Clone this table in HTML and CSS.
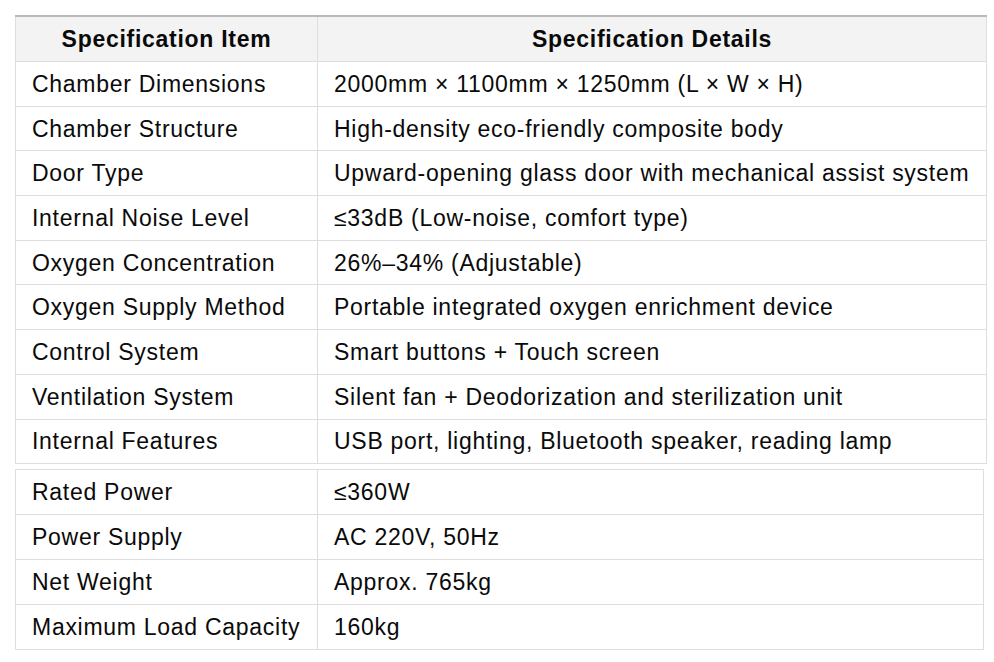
FILE: index.html
```html
<!DOCTYPE html>
<html lang="en">
<head>
<meta charset="utf-8">
<title>Specifications</title>
<link rel="stylesheet" href="styles.css">
</head>
<body>
<div class="wrap">
<table class="spec spec-top">
  <colgroup><col class="c1"><col></colgroup>
  <thead>
    <tr><th>Specification Item</th><th>Specification Details</th></tr>
  </thead>
  <tbody>
    <tr><td>Chamber Dimensions</td><td>2000mm × 1100mm × 1250mm (L × W × H)</td></tr>
    <tr><td>Chamber Structure</td><td>High-density eco-friendly composite body</td></tr>
    <tr><td>Door Type</td><td>Upward-opening glass door with mechanical assist system</td></tr>
    <tr><td>Internal Noise Level</td><td>≤33dB (Low-noise, comfort type)</td></tr>
    <tr><td>Oxygen Concentration</td><td>26%–34% (Adjustable)</td></tr>
    <tr><td>Oxygen Supply Method</td><td>Portable integrated oxygen enrichment device</td></tr>
    <tr><td>Control System</td><td>Smart buttons + Touch screen</td></tr>
    <tr><td>Ventilation System</td><td>Silent fan + Deodorization and sterilization unit</td></tr>
    <tr><td>Internal Features</td><td>USB port, lighting, Bluetooth speaker, reading lamp</td></tr>
  </tbody>
</table>
<table class="spec spec-bottom">
  <colgroup><col class="c1"><col></colgroup>
  <tbody>
    <tr><td>Rated Power</td><td>≤360W</td></tr>
    <tr><td>Power Supply</td><td>AC 220V, 50Hz</td></tr>
    <tr><td>Net Weight</td><td>Approx. 765kg</td></tr>
    <tr><td>Maximum Load Capacity</td><td>160kg</td></tr>
  </tbody>
</table>
</div>
</body>
</html>
```
FILE: styles.css
```css
html, body {
  margin: 0;
  padding: 0;
  background: #ffffff;
}
body {
  font-family: "Liberation Sans", Arial, Helvetica, sans-serif;
  color: #0a0a0a;
}
.wrap {
  padding: 15px 0 0 15px;
  display: flex;
  flex-direction: column;
  align-items: flex-start;
  gap: 5px;
}
.spec {
  border-collapse: collapse;
  table-layout: fixed;
  font-size: 23px;
  letter-spacing: 0.72px;
  line-height: 26px;
}
.spec-top {
  width: 972px;
  border-top: 2px solid #b9b9b9;
}
.spec-bottom {
  width: 969px;
}
.spec col.c1 {
  width: 302px;
}
.spec th,
.spec td {
  border: 1px solid #dedede;
  padding: 0 0 0 16px;
  height: 43.7px;
  text-align: left;
  vertical-align: middle;
  white-space: nowrap;
}
.spec-top th {
  border-top: 2px solid #b9b9b9;
}
.spec th {
  background: #f3f3f3;
  font-weight: bold;
  text-align: center;
  padding: 0;
  height: 44px;
}
.spec td {
  background: #ffffff;
}
.spec-bottom td {
  height: 44px;
}
```
